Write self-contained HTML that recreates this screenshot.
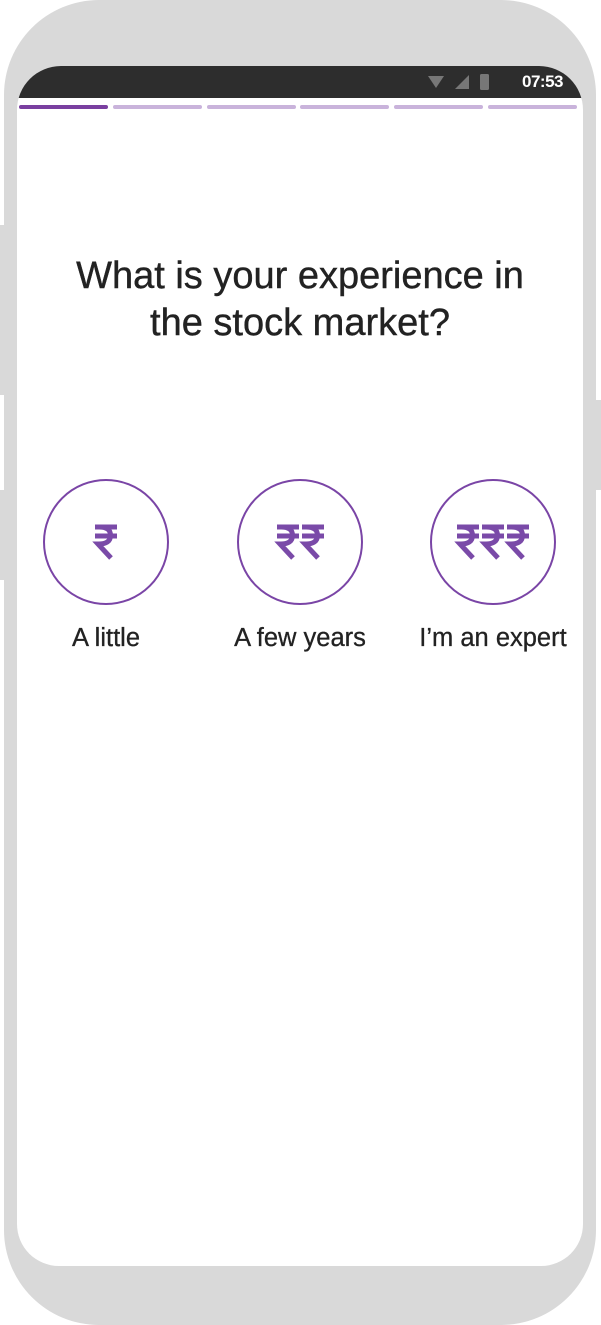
<!DOCTYPE html>
<html><head><meta charset="utf-8"><style>
html,body{margin:0;padding:0;background:#fff;}
body{width:601px;height:1325px;position:relative;overflow:hidden;font-family:"Liberation Sans",sans-serif;}
.phone{position:absolute;left:4px;top:0;width:592px;height:1325px;background:#d9d9d9;border-radius:95px;}
.btn{position:absolute;background:#d9d9d9;width:6px;}
.screen{position:absolute;left:17px;top:66px;width:566px;height:1200px;background:#fff;border-radius:44px 44px 42px 42px;overflow:hidden;}
.status{position:absolute;left:0;top:0;width:566px;height:32px;background:#2d2d2d;}
.time{position:absolute;right:20px;top:6px;color:#fff;font-size:17px;font-weight:bold;letter-spacing:-0.5px;}
.bars{position:absolute;top:39px;left:2px;}
.bar{position:absolute;top:0;height:4px;width:89px;border-radius:2px;background:#c9b3db;}
h1{position:absolute;left:-20px;top:187px;width:606px;margin:0;text-align:center;font-weight:normal;font-size:38px;line-height:47px;color:#222;-webkit-text-stroke:0.4px #222;}
.c{position:absolute;top:413px;width:122px;height:122px;border:2.5px solid #7a45a6;border-radius:50%;}
.c svg{position:absolute;left:0;top:0;}
.lab{position:absolute;top:558px;width:200px;text-align:center;font-size:25.5px;color:#222;-webkit-text-stroke:0.3px #222;}
</style></head><body>
<div class="phone"></div>
<div class="btn" style="left:0;top:225px;height:170px;"></div>
<div class="btn" style="left:0;top:490px;height:90px;"></div>
<div class="btn" style="left:595px;top:400px;height:90px;"></div>
<div class="screen">
  <div class="status">
    <svg style="position:absolute;left:408px;top:7px" width="70" height="20">
      <path d="M3,3 H19 L11,15 Z" fill="#777"/>
      <path d="M30,16 L44,2 V16 Z" fill="#777"/>
      <rect x="55" y="1" width="9" height="16" rx="1.5" fill="#777"/>
    </svg>
    <div class="time">07:53</div>
  </div>
  <div class="bars">
    <div class="bar" style="left:0;background:#7a3fa0"></div>
    <div class="bar" style="left:94px"></div>
    <div class="bar" style="left:188px"></div>
    <div class="bar" style="left:281px"></div>
    <div class="bar" style="left:375px"></div>
    <div class="bar" style="left:469px"></div>
  </div>
  <h1>What is your experience in<br>the stock market?</h1>

  <div class="c" style="left:26px">
    <svg width="122" height="122"><g fill="none" stroke="#7a4aa8" stroke-width="5">
      <g transform="translate(50,43)"><path d="M0,3H22M0,12H22M4,3C12,3 15.5,6 15.5,11.5C15.5,17.5 11,20 4,20L3,20L16,34"/></g>
    </g></svg>
  </div>
  <div class="lab" style="left:-11px">A little</div>

  <div class="c" style="left:220px">
    <svg width="122" height="122"><g fill="none" stroke="#7a4aa8" stroke-width="5">
      <g transform="translate(38,43)"><path d="M0,3H22M0,12H22M4,3C12,3 15.5,6 15.5,11.5C15.5,17.5 11,20 4,20L3,20L16,34"/></g>
      <g transform="translate(63,43)"><path d="M0,3H22M0,12H22M4,3C12,3 15.5,6 15.5,11.5C15.5,17.5 11,20 4,20L3,20L16,34"/></g>
    </g></svg>
  </div>
  <div class="lab" style="left:183px">A few years</div>

  <div class="c" style="left:413px">
    <svg width="122" height="122"><g fill="none" stroke="#7a4aa8" stroke-width="5">
      <g transform="translate(25,43)"><path d="M0,3H22M0,12H22M4,3C12,3 15.5,6 15.5,11.5C15.5,17.5 11,20 4,20L3,20L16,34"/></g>
      <g transform="translate(50,43)"><path d="M0,3H22M0,12H22M4,3C12,3 15.5,6 15.5,11.5C15.5,17.5 11,20 4,20L3,20L16,34"/></g>
      <g transform="translate(75,43)"><path d="M0,3H22M0,12H22M4,3C12,3 15.5,6 15.5,11.5C15.5,17.5 11,20 4,20L3,20L16,34"/></g>
    </g></svg>
  </div>
  <div class="lab" style="left:376px">I’m an expert</div>
</div>
</body></html>
